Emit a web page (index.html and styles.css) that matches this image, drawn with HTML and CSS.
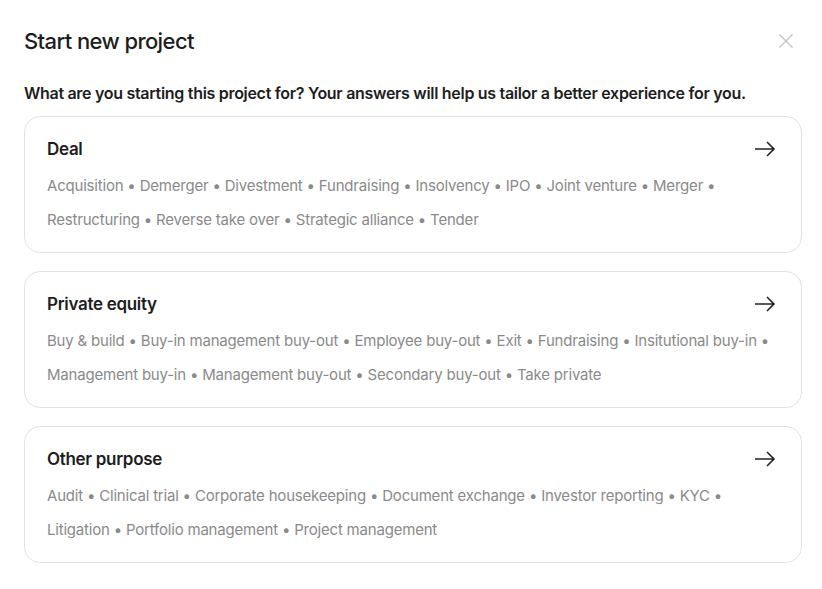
FILE: index.html
```html
<!DOCTYPE html>
<html lang="en">
<head>
<meta charset="utf-8">
<link rel="stylesheet" href="styles.css">
</head>
<body>
<div class="dialog">
  <header class="head">
    <h1 class="title">Start new project</h1>
    <button class="close" aria-label="Close">
      <svg width="16" height="16" viewBox="0 0 16 16"><path d="M1.5 1.5 L14.5 14.5 M14.5 1.5 L1.5 14.5" stroke="#c4c4c4" stroke-width="1.4" fill="none"/></svg>
    </button>
  </header>
  <p class="lead">What are you starting this project for? Your answers will help us tailor a better experience for you.</p>
  <div class="cards">
    <div class="card">
      <div class="card-head">
        <h2 class="card-title">Deal</h2>
        <svg class="arrow" width="22" height="16" viewBox="0 0 22 16"><path d="M1 8 H20 M13 1 L20 8 L13 15" stroke="#222" stroke-width="1.6" fill="none" stroke-linejoin="miter"/></svg>
      </div>
      <p class="tags">Acquisition • Demerger • Divestment • Fundraising • Insolvency • IPO • Joint venture • Merger • Restructuring • Reverse take over • Strategic alliance • Tender</p>
    </div>
    <div class="card">
      <div class="card-head">
        <h2 class="card-title">Private equity</h2>
        <svg class="arrow" width="22" height="16" viewBox="0 0 22 16"><path d="M1 8 H20 M13 1 L20 8 L13 15" stroke="#222" stroke-width="1.6" fill="none"/></svg>
      </div>
      <p class="tags">Buy &amp; build • Buy-in management buy-out • Employee buy-out • Exit • Fundraising • Insitutional buy-in • Management buy-in • Management buy-out • Secondary buy-out • Take private</p>
    </div>
    <div class="card">
      <div class="card-head">
        <h2 class="card-title">Other purpose</h2>
        <svg class="arrow" width="22" height="16" viewBox="0 0 22 16"><path d="M1 8 H20 M13 1 L20 8 L13 15" stroke="#222" stroke-width="1.6" fill="none"/></svg>
      </div>
      <p class="tags">Audit • Clinical trial • Corporate housekeeping • Document exchange • Investor reporting • KYC • Litigation • Portfolio management • Project management</p>
    </div>
  </div>
</div>
</body>
</html>
```
FILE: styles.css
```css
* { box-sizing: border-box; }
html, body { margin: 0; background: #fff; }
body { font-family: Inter, "Noto Sans", sans-serif; color: #1d1d1d; }
.dialog { padding: 24px 20px 0 24px; }
.head { display: flex; justify-content: space-between; align-items: center; height: 34px; }
.title { margin: 0; font-size: 22px; font-weight: 500; letter-spacing: -0.6px; color: #1d1d1d; }
.close { border: 0; background: none; padding: 0; margin-right: 8px; width: 16px; height: 16px; display: flex; }
.lead { margin: 25px 0 0; font-size: 16px; font-weight: 600; letter-spacing: -0.3px; line-height: 20px; color: #1d1d1d; }
.cards { display: flex; flex-direction: column; gap: 18px; margin-top: 13px; }
.card { border: 1px solid #e3e3e3; border-radius: 16px; height: 137px; padding: 21px 25px 0 22px; }
.card-head { display: flex; justify-content: space-between; align-items: center; height: 22px; }
.card-title { margin: 0; font-size: 17px; font-weight: 600; letter-spacing: -0.3px; color: #1d1d1d; }
.arrow { display: block; }
.tags { margin: 9px -5px 0 0; font-size: 15px; line-height: 34px; color: #8a8a8a; letter-spacing: -0.2px; }
```
